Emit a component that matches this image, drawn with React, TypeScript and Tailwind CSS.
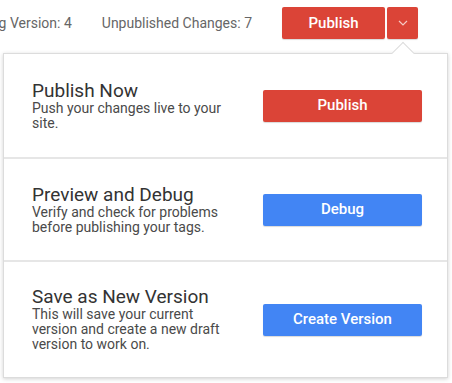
import React from 'react';

type Action = {
  title: string;
  text: string;
  button: string;
  color: string;
  height: string;
};

const actions: Action[] = [
  { title: 'Publish Now', text: 'Push your changes live to your site.', button: 'Publish', color: 'bg-[#db4437]', height: 'h-[103px]' },
  { title: 'Preview and Debug', text: 'Verify and check for problems before publishing your tags.', button: 'Debug', color: 'bg-[#4285f4]', height: 'h-[103px]' },
  { title: 'Save as New Version', text: 'This will save your current version and create a new draft version to work on.', button: 'Create Version', color: 'bg-[#4285f4]', height: 'h-[117px]' },
];

export default function App() {
  return (
    <div className="w-[452px] h-[383px] overflow-hidden bg-white font-['Roboto','Liberation_Sans',sans-serif]">
      {/* top bar */}
      <div className="flex items-center justify-end gap-[30px] pt-[7px] pr-[34px] whitespace-nowrap">
        <span className="text-[14px] text-[#666]">Working Version: 4</span>
        <span className="text-[14px] text-[#666]">Unpublished Changes: 7</span>
        <div className="flex gap-[2px]">
          <button className="w-[103px] h-[32px] rounded-[2px] bg-[#db4437] text-white text-[15px] font-medium shadow-[0_1px_1px_rgba(0,0,0,0.15)]">
            Publish
          </button>
          <button className="w-[31px] h-[32px] rounded-[2px] bg-[#db4437] flex items-center justify-center shadow-[0_1px_1px_rgba(0,0,0,0.15)]">
            <svg width="10" height="6" viewBox="0 0 10 6" fill="none" stroke="#f6c9c4" strokeWidth="1.2">
              <path d="M1 1l4 4 4-4" />
            </svg>
          </button>
        </div>
      </div>

      {/* dropdown panel */}
      <div className="relative ml-[3px] mt-[14px] w-[445px] border border-[#dcdcdc] bg-white shadow-[0_1px_4px_rgba(0,0,0,0.18)]">
        <div className="absolute -top-[9px] left-[391px] w-[16px] h-[16px] rotate-45 bg-white border-l border-t border-[#dcdcdc]" />
        {actions.map((a, i) => (
          <div
            key={a.title}
            className={`relative flex items-center justify-between pl-[28px] pr-[25px] ${a.height} ${i > 0 ? 'border-t-2 border-[#e6e6e6]' : ''}`}
          >
            <div className="w-[200px]">
              <div className="text-[19px] leading-[20px] text-[#333]">{a.title}</div>
              <div className="text-[14px] leading-[15px] text-[#4a4a4a]">{a.text}</div>
            </div>
            <button className={`w-[159px] h-[32px] rounded-[2px] ${a.color} text-white text-[15px] font-medium shadow-[0_1px_1px_rgba(0,0,0,0.15)]`}>
              {a.button}
            </button>
          </div>
        ))}
      </div>
    </div>
  );
}
